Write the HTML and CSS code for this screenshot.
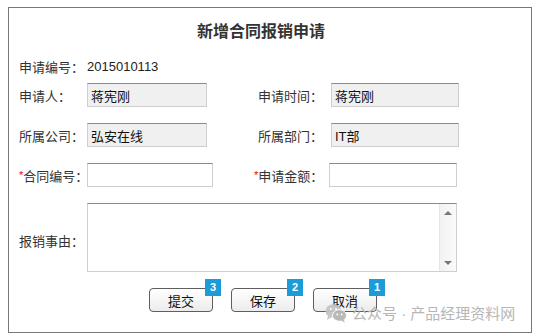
FILE: index.html
```html
<html>
<head>
<title>新增合同报销申请</title>
<meta charset="utf-8">
<link rel="stylesheet" href="styles.css">
</head>
<body>

<form class="dialog">
<h1 class="title">新增合同报销申请</h1>

<div class="row row-first">
<label>申请编号：</label>
<span class="value">2015010113</span>
</div>

<div class="row row-tight">
<label>申请人：</label>
<input class="field readonly" type="text" value="蒋宪刚" readonly>
<label>申请时间：</label>
<input class="field readonly wide" type="text" value="蒋宪刚" readonly>
</div>

<div class="row">
<label>所属公司：</label>
<input class="field readonly" type="text" value="弘安在线" readonly>
<label>所属部门：</label>
<input class="field readonly wide" type="text" value="IT部" readonly>
</div>

<div class="row">
<label><span class="req">*</span>合同编号：</label>
<input class="field mid" type="text">
<label class="shift"><span class="req">*</span>申请金额：</label>
<input class="field wide shift-input" type="text">
</div>

<div class="row row-area">
<label class="area-label">报销事由：</label>
<div class="area-box">
<textarea class="area"></textarea>
<div class="scroll">
<span class="arrow-up"></span>
<span class="arrow-down"></span>
</div>
</div>
</div>

<div class="buttons">
<button type="button" class="btn">提交<span class="badge">3</span></button>
<button type="button" class="btn">保存<span class="badge">2</span></button>
<button type="button" class="btn">取消<span class="badge">1</span></button>
</div>

<div class="watermark">
<svg width="22" height="20" viewBox="0 0 22 20">
<ellipse cx="8.5" cy="8" rx="8" ry="6.8" fill="#c4c4c4"/>
<path d="M3 13 L2 17 L6.5 14 Z" fill="#c4c4c4"/>
<ellipse cx="14.5" cy="12.5" rx="7" ry="5.8" fill="#b6b6b6" stroke="#fff" stroke-width="1"/>
<path d="M18.5 16.5 L20 19.5 L16 17.5 Z" fill="#b6b6b6"/>
<circle cx="5.8" cy="6" r="1" fill="#fff"/>
<circle cx="11" cy="6" r="1" fill="#fff"/>
<circle cx="12.3" cy="11.5" r="0.9" fill="#fff"/>
<circle cx="16.7" cy="11.5" r="0.9" fill="#fff"/>
</svg>
<span>公众号 · 产品经理资料网</span>
</div>
</form>

</body>
</html>
```

FILE: styles.css
```css
body {
  margin: 7px 2px 0 8px;
  background: #fff;
  font-family: "Liberation Sans", "Noto Sans CJK SC", sans-serif;
  font-size: 13px;
  color: #333;
}

.dialog {
  position: relative;
  box-sizing: border-box;
  height: 326px;
  margin: 0;
  border: 1px solid #777;
  padding: 0 0 0 10px;
}

.title {
  margin: 0;
  padding-top: 14px;
  padding-right: 28px;
  font-size: 16px;
  line-height: 20px;
  font-weight: bold;
  text-align: center;
  color: #333;
}

.row {
  display: grid;
  grid-template-columns: 68px 171px 73px 128px;
  align-items: center;
  margin-top: 16px;
}

.row-first {
  margin-top: 12px;
  height: 24px;
}

.row-tight {
  margin-top: 5px;
}

.row label {
  white-space: nowrap;
  color: #333;
}

.value {
  color: #222;
}

.req {
  color: #e00;
  font-size: 11px;
  position: relative;
  top: -2px;
}

.field {
  box-sizing: border-box;
  width: 120px;
  height: 24px;
  margin: 0;
  padding: 0 3px;
  border: 1px solid #cfcfcf;
  border-top-color: #8a8a8a;
  background: #fff;
  font-family: "Liberation Sans", "Noto Sans CJK SC", sans-serif;
  font-size: 13px;
  color: #111;
  outline: none;
}

.readonly {
  background: #f0f0f0;
}

.wide {
  width: 128px;
}

.mid {
  width: 126px;
}

.shift {
  margin-left: -4px;
}

.shift-input {
  margin-left: -2px;
}

.row-area {
  margin-top: 16px;
}

.area-label {
  padding-top: 6px;
}

.area-box {
  grid-column: 2 / 5;
  display: flex;
  box-sizing: border-box;
  width: 370px;
  height: 69px;
  border: 1px solid #cfcfcf;
  border-top-color: #8a8a8a;
  background: #fff;
}

.area {
  flex: 1;
  margin: 0;
  padding: 2px;
  border: none;
  outline: none;
  resize: none;
  font-family: "Liberation Sans", "Noto Sans CJK SC", sans-serif;
  font-size: 13px;
}

.scroll {
  display: flex;
  flex-direction: column;
  justify-content: space-between;
  align-items: center;
  width: 16px;
  padding: 7px 0 6px;
  border-left: 1px solid #e6e6e6;
  background: linear-gradient(to right, #f2f2f2, #fafafa);
}

.arrow-up {
  width: 0;
  height: 0;
  border-left: 4px solid transparent;
  border-right: 4px solid transparent;
  border-bottom: 4px solid #777;
}

.arrow-down {
  width: 0;
  height: 0;
  border-left: 4px solid transparent;
  border-right: 4px solid transparent;
  border-top: 4px solid #777;
}

.buttons {
  display: flex;
  gap: 18px;
  margin-top: 16px;
  padding-left: 130px;
}

.btn {
  position: relative;
  width: 64px;
  height: 24px;
  padding: 0;
  border: 1px solid #5e5e5e;
  border-radius: 4px;
  background: linear-gradient(#ffffff, #ececec);
  font-family: "Liberation Sans", "Noto Sans CJK SC", sans-serif;
  font-size: 13px;
  color: #111;
}

.badge {
  position: absolute;
  top: -10px;
  right: -9px;
  width: 16px;
  height: 17px;
  background: #1b9cd8;
  color: #fff;
  font-size: 11px;
  font-weight: bold;
  line-height: 17px;
  text-align: center;
}

.watermark {
  position: absolute;
  left: 316px;
  top: 294px;
  display: flex;
  align-items: center;
  gap: 5px;
  color: #b3b3b3;
  font-size: 15px;
  opacity: 0.95;
}

.watermark svg {
  display: block;
}
```
